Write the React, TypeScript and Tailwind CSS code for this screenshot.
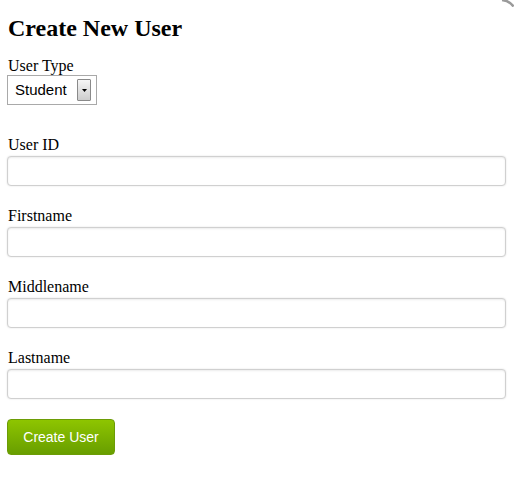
import React from "react";

const fields = ["User ID", "Firstname", "Middlename", "Lastname"];

function TextField({ label, first }: { label: string; first?: boolean }) {
  return (
    <div className={first ? "mt-[31px]" : "mt-[21px]"}>
      <label className="block pl-px text-[16px] leading-[18px]">{label}</label>
      <input
        type="text"
        className="mt-[2px] block h-[30px] w-full rounded-[4px] border border-[#d0d0d0] bg-white px-2 font-['Liberation_Sans',sans-serif] text-[14px] shadow-[0_0_2px_rgba(0,0,0,0.12),inset_0_1px_2px_rgba(0,0,0,0.08)] outline-none"
      />
    </div>
  );
}

export default function App() {
  return (
    <div className="relative min-h-[480px] w-[514px] bg-white pt-[14px] pl-[7px] pr-[8px] font-['Liberation_Serif',serif] text-black">
      {/* corner of the dialog frame peeking in */}
      <svg className="absolute right-0 top-0 h-[7px] w-[13px]" viewBox="0 0 13 7">
        <path d="M1 0 Q8 0.5 12.5 6.5" fill="none" stroke="#9a9a9a" strokeWidth="2.5" />
      </svg>

      <h2 className="pl-px text-[24px] font-bold leading-[28px]">Create New User</h2>

      <div className="mt-[15px] pl-px text-[16px] leading-[18px]">User Type</div>
      <div className="flex h-[30px] w-[90px] items-center border border-[#a9a9a9] bg-white pl-[7px] pr-[5px] font-['Liberation_Sans',sans-serif] text-[15px]">
        <span>Student</span>
        <span className="ml-auto flex h-[22px] w-[14px] items-center justify-center rounded-[1px] border border-[#8a8a8a] bg-gradient-to-b from-[#f6f6f6] to-[#cdcdcd]">
          <svg width="5" height="3" viewBox="0 0 5 3">
            <path d="M0 0 H5 L2.5 3 Z" fill="#000" />
          </svg>
        </span>
      </div>

      {fields.map((f, i) => (
        <TextField key={f} label={f} first={i === 0} />
      ))}

      <button className="mt-[20px] flex h-[36px] w-[108px] items-center justify-center rounded-[4px] border border-[#6c9c06] bg-gradient-to-b from-[#8ec500] to-[#689e00] font-['Liberation_Sans',sans-serif] text-[14px] text-white">
        Create User
      </button>
    </div>
  );
}
